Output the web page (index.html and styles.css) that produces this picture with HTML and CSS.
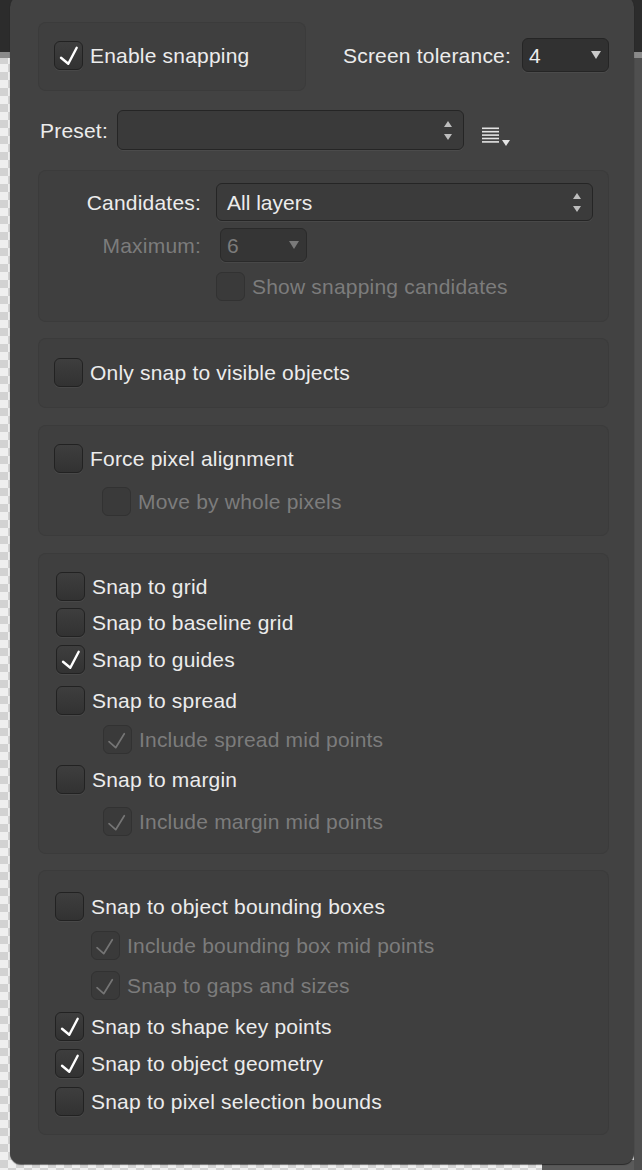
FILE: index.html
```html
<!DOCTYPE html>
<html>
<head>
<meta charset="utf-8">
<title>Snapping</title>
<link rel="stylesheet" href="styles.css">
</head>
<body>
<div class="panel">
  <div class="top-row">
    <div class="group group-enable">
      <div class="row">
        <span class="cb"><svg class="ck" viewBox="0 0 27 27"><path d="M6 15.7 L13.3 21.7 L21.7 5.7"/></svg></span>
        <span class="lbl">Enable snapping</span>
      </div>
    </div>
    <div class="tolerance">
      <span class="lbl">Screen tolerance:</span>
      <div class="select sel-tol">
        <span class="val">4</span>
        <svg class="tri" viewBox="0 0 10 8"><path d="M0 0 H10 L5 8 Z"/></svg>
      </div>
    </div>
  </div>

  <div class="preset-row">
    <span class="lbl">Preset:</span>
    <div class="field preset-field">
      <svg class="stepper" viewBox="0 0 8 19"><path d="M4 0 L8 6 H0 Z M0 13 H8 L4 19 Z"/></svg>
    </div>
    <svg class="menu-icon" viewBox="0 0 28 20">
      <rect x="0" y="0.5" width="17" height="1.6"/>
      <rect x="0" y="3.9" width="17" height="1.6"/>
      <rect x="0" y="7.3" width="17" height="1.6"/>
      <rect x="0" y="10.7" width="17" height="1.6"/>
      <rect x="0" y="14.1" width="17" height="1.6"/>
      <path d="M20 13 H28 L24 19 Z"/>
    </svg>
  </div>

  <div class="group group-cand">
    <div class="form-grid">
      <span class="lbl right">Candidates:</span>
      <div class="field cand-field">
        <span class="val">All layers</span>
        <svg class="stepper" viewBox="0 0 8 19"><path d="M4 0 L8 6 H0 Z M0 13 H8 L4 19 Z"/></svg>
      </div>
      <span class="lbl right dis">Maximum:</span>
      <div class="select sel-max dis">
        <span class="val">6</span>
        <svg class="tri" viewBox="0 0 10 8"><path d="M0 0 H10 L5 8 Z"/></svg>
      </div>
      <span></span>
      <div class="row dis">
        <span class="cb"></span>
        <span class="lbl">Show snapping candidates</span>
      </div>
    </div>
  </div>

  <div class="group group-visible">
    <div class="row">
      <span class="cb"></span>
      <span class="lbl">Only snap to visible objects</span>
    </div>
  </div>

  <div class="group group-pixel">
    <div class="row">
      <span class="cb"></span>
      <span class="lbl">Force pixel alignment</span>
    </div>
    <div class="row sub dis">
      <span class="cb"></span>
      <span class="lbl">Move by whole pixels</span>
    </div>
  </div>

  <div class="group group-grid">
    <div class="row">
      <span class="cb"></span>
      <span class="lbl">Snap to grid</span>
    </div>
    <div class="row g7">
      <span class="cb"></span>
      <span class="lbl">Snap to baseline grid</span>
    </div>
    <div class="row g8">
      <span class="cb"><svg class="ck" viewBox="0 0 27 27"><path d="M6 15.7 L13.3 21.7 L21.7 5.7"/></svg></span>
      <span class="lbl">Snap to guides</span>
    </div>
    <div class="row g12">
      <span class="cb"></span>
      <span class="lbl">Snap to spread</span>
    </div>
    <div class="row sub dis g10">
      <span class="cb"><svg class="ck" viewBox="0 0 27 27"><path d="M5 15.7 L11.7 21.7 L20.3 7.7"/></svg></span>
      <span class="lbl">Include spread mid points</span>
    </div>
    <div class="row g11">
      <span class="cb"></span>
      <span class="lbl">Snap to margin</span>
    </div>
    <div class="row sub dis g13">
      <span class="cb"><svg class="ck" viewBox="0 0 27 27"><path d="M5 15.7 L11.7 21.7 L20.3 7.7"/></svg></span>
      <span class="lbl">Include margin mid points</span>
    </div>
  </div>

  <div class="group group-objects">
    <div class="row">
      <span class="cb"></span>
      <span class="lbl">Snap to object bounding boxes</span>
    </div>
    <div class="row sub dis g10">
      <span class="cb"><svg class="ck" viewBox="0 0 27 27"><path d="M5 15.7 L11.7 21.7 L20.3 7.7"/></svg></span>
      <span class="lbl">Include bounding box mid points</span>
    </div>
    <div class="row sub dis g11">
      <span class="cb"><svg class="ck" viewBox="0 0 27 27"><path d="M5 15.7 L11.7 21.7 L20.3 7.7"/></svg></span>
      <span class="lbl">Snap to gaps and sizes</span>
    </div>
    <div class="row g12">
      <span class="cb"><svg class="ck" viewBox="0 0 27 27"><path d="M6 15.7 L13.3 21.7 L21.7 5.7"/></svg></span>
      <span class="lbl">Snap to shape key points</span>
    </div>
    <div class="row g8">
      <span class="cb"><svg class="ck" viewBox="0 0 27 27"><path d="M6 15.7 L13.3 21.7 L21.7 5.7"/></svg></span>
      <span class="lbl">Snap to object geometry</span>
    </div>
    <div class="row g9">
      <span class="cb"></span>
      <span class="lbl">Snap to pixel selection bounds</span>
    </div>
  </div>
</div>
</body>
</html>
```

FILE: styles.css
```css
* { box-sizing: border-box; }

html, body { margin: 0; padding: 0; }

body {
  width: 642px;
  height: 1170px;
  overflow: hidden;
  font-family: "Liberation Sans", Arial, sans-serif;
  font-size: 21px;
  color: #ececec;
  background:
    linear-gradient(#2c2c2c, #2c2c2c) 0 0 / 100% 52px no-repeat,
    linear-gradient(#8a8a8a, #8a8a8a) 0 52px / 100% 6px no-repeat,
    linear-gradient(#4f4f4f, #4f4f4f) right 0 top 0 / 8px 100% no-repeat,
    linear-gradient(#5a5a5a, #5a5a5a) right 0 bottom 0 / 100px 10px no-repeat,
    conic-gradient(#d2d2d2 0 25%, #efefef 0 50%, #d2d2d2 0 75%, #efefef 0) 0 0 / 16px 16px;
}

.panel {
  width: 624px;
  margin: -4px 0 0 10px;
  padding: 26px 25px 29px 28px;
  background: #424242;
  border-radius: 11px;
  box-shadow: 0 1px 1px rgba(0, 0, 0, 0.55);
  display: flex;
  flex-direction: column;
}

.group {
  background: #3f3f3f;
  border-radius: 8px;
  box-shadow: inset 0 0 0 1px rgba(0, 0, 0, 0.06);
  display: flex;
  flex-direction: column;
}

.lbl {
  line-height: 1;
  white-space: nowrap;
  letter-spacing: 0.2px;
}

.dis .lbl, .lbl.dis { color: #7c7c7c; }

.right { text-align: right; }

/* checkbox rows */
.row {
  display: flex;
  align-items: center;
  gap: 7px;
  height: 29px;
}

.row.sub { padding-left: 48px; }

.cb {
  flex: none;
  width: 29px;
  height: 29px;
  border-radius: 6px;
  background: linear-gradient(#3e3e3e, #323232);
  border: 1px solid #222222;
  box-shadow: 0 1px 0 rgba(255, 255, 255, 0.05);
  display: flex;
  align-items: center;
  justify-content: center;
}

.ck {
  width: 27px;
  height: 27px;
  fill: none;
  stroke: #ffffff;
  stroke-width: 2.4;
  stroke-linecap: round;
  stroke-linejoin: round;
}

.dis .cb {
  background: #3a3a3a;
  border-color: #323232;
  box-shadow: none;
}

.dis .ck {
  stroke: #757575;
  stroke-width: 1.7;
}

.g7 { margin-top: 7px; }
.g8 { margin-top: 8px; }
.g9 { margin-top: 9px; }
.g10 { margin-top: 10px; }
.g11 { margin-top: 11px; }
.g12 { margin-top: 12px; }
.g13 { margin-top: 13px; }

/* top row */
.top-row {
  display: flex;
  justify-content: space-between;
  align-items: center;
}

.group-enable {
  width: 268px;
  height: 69px;
  padding: 18px 16px 22px;
}

.group-enable .row { margin-top: 1px; }

.tolerance {
  display: flex;
  align-items: center;
  gap: 11px;
  margin-top: -3px;
}

.select, .field {
  display: flex;
  align-items: center;
  border-radius: 6px;
  border: 1px solid #252525;
  box-shadow: 0 1px 0 rgba(255, 255, 255, 0.05);
}

.val { line-height: 1; }

.sel-tol {
  width: 87px;
  height: 34px;
  background: #313131;
  padding: 0 7px 0 6px;
  justify-content: space-between;
}

.tri {
  width: 10px;
  height: 8px;
  fill: #c9c9c9;
}

/* preset */
.preset-row {
  display: flex;
  align-items: center;
  margin-top: 19px;
  padding-left: 2px;
}

.preset-row .lbl { margin-right: 9px; }

.preset-field {
  width: 347px;
  height: 40px;
  background: #3a3a3a;
  justify-content: flex-end;
  padding-right: 11px;
}

.stepper {
  width: 8px;
  height: 19px;
  fill: #bdbdbd;
}

.menu-icon {
  width: 28px;
  height: 20px;
  fill: #e4e4e4;
  margin-left: 18px;
  margin-top: 13px;
}

/* candidates */
.group-cand {
  margin-top: 20px;
  padding: 13px 16px 21px 0;
}

.form-grid {
  display: grid;
  grid-template-columns: 163px 1fr;
  column-gap: 15px;
  row-gap: 7px;
  align-items: center;
}

.cand-field {
  height: 38px;
  background: #3b3b3b;
  justify-content: space-between;
  padding: 0 11px 0 10px;
}

.sel-max {
  width: 87px;
  height: 34px;
  margin-left: 4px;
  background: #353535;
  padding: 0 7px 0 6px;
  justify-content: space-between;
  color: #7c7c7c;
  border-color: #2a2a2a;
}

.sel-max .tri { fill: #7a7a7a; }

.form-grid .row { margin-top: 3px; }

/* groups */
.group-visible {
  margin-top: 16px;
  padding: 20px 16px 21px;
}

.group-pixel {
  margin-top: 17px;
  padding: 19px 16px 20px;
  gap: 14px;
}

.group-grid {
  margin-top: 17px;
  padding: 19px 18px 18px;
}

.group-grid .row.sub { padding-left: 47px; }

.group-objects {
  margin-top: 16px;
  padding: 22px 17px 19px;
}

.group-objects .row.sub { padding-left: 36px; }
```
